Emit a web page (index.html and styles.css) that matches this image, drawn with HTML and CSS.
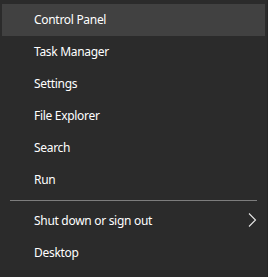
FILE: index.html
```html
<!DOCTYPE html>
<html lang="en">
<head>
  <meta charset="UTF-8">
  <title>Quick Link Menu</title>
  <link rel="stylesheet" href="styles.css">
</head>
<body>
  <div class="menu">
    <ul class="menu_list">
      <li class="menu_item active">Control Panel</li>
      <li class="menu_item">Task Manager</li>
      <li class="menu_item">Settings</li>
      <li class="menu_item">File Explorer</li>
      <li class="menu_item">Search</li>
      <li class="menu_item">Run</li>
    </ul>
    <hr class="separator">
    <ul class="menu_list">
      <li class="menu_item">
        <span>Shut down or sign out</span>
        <svg class="chevron" width="9" height="14" viewBox="0 0 9 14">
          <polyline points="1,0.5 7.5,7 1,13.5" fill="none" stroke="#e6e6e6" stroke-width="1.1"/>
        </svg>
      </li>
      <li class="menu_item">Desktop</li>
    </ul>
  </div>
</body>
</html>
```

FILE: styles.css
```css
*{
  margin: 0;
  padding: 0;
  box-sizing: border-box;
}
html, body{
  height: 100%;
}
body{
  background-color: #2b2b2b;
  font-family: "Noto Sans", "Open Sans", sans-serif;
  font-size: 12px;
  letter-spacing: -0.3px;
  color: #ffffff;
}
.menu{
  width: 268px;
  height: 277px;
  padding: 4px 2px 8px 2px;
  border-right: 1px solid #262626;
}
.menu_list{
  list-style-type: none;
}
.menu_item{
  height: 32px;
  display: flex;
  align-items: center;
  justify-content: space-between;
  padding: 0 8px 2px 32px;
}
.menu_item.active{
  background-color: #414141;
}
.separator{
  border: none;
  height: 1px;
  background-color: #7d7d7d;
  margin: 4px 8px;
}
.chevron{
  display: block;
}
```
